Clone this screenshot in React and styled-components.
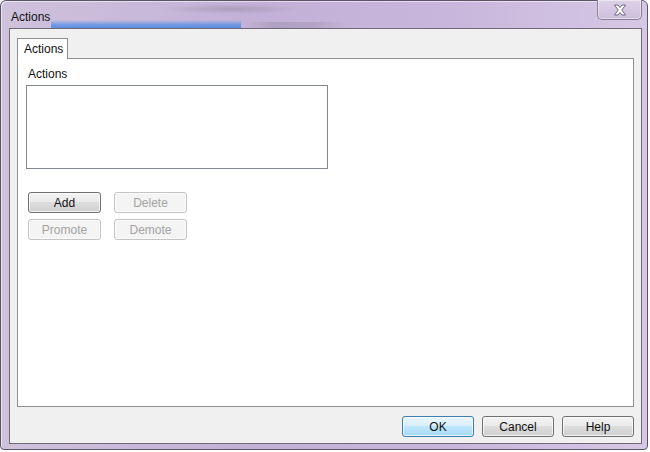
import React from "react";
import styled, { createGlobalStyle } from "styled-components";

const Global = createGlobalStyle`
  body {
    margin: 0;
    background: #ffffff;
    font-family: "Liberation Sans", Arial, sans-serif;
  }
`;

const Window = styled.div`
  box-sizing: border-box;
  width: 648px;
  height: 450px;
  border: 1px solid #5c5568;
  border-radius: 6px 6px 4px 4px;
  background:
    linear-gradient(rgba(160, 190, 240, 0) 0%, rgba(90, 145, 230, 0.75) 45%, rgba(70, 128, 226, 0.95) 100%) 50px 19px / 190px 10px no-repeat,
    linear-gradient(90deg, rgba(150, 140, 165, 0) 0%, rgba(150, 140, 165, 0.45) 30%, rgba(150, 140, 165, 0.35) 70%, rgba(150, 140, 165, 0) 100%) 245px 21px / 100px 7px no-repeat,
    radial-gradient(ellipse 70px 5px at 230px 8px, rgba(120, 110, 130, 0.3), rgba(120, 110, 130, 0) 100%),
    linear-gradient(90deg, #cfc2dc 0%, #c2b0d6 40%, #c9b6dc 70%, #d6c8e4 100%);
  display: flex;
  flex-direction: column;
  padding: 0 5px 5px 8px;
  box-shadow: inset 1px 1px 0 rgba(255, 255, 255, 0.55);
`;

const TitleBar = styled.div`
  height: 28px;
  display: flex;
  align-items: flex-start;
  justify-content: space-between;
`;

const Title = styled.span`
  font-size: 12px;
  color: #111;
  padding: 9px 0 0 2px;
`;

const CloseButton = styled.div`
  box-sizing: border-box;
  width: 45px;
  height: 20px;
  margin-top: -1px;
  border: 1px solid #8a7e99;
  border-top: none;
  border-radius: 0 0 5px 5px;
  background: linear-gradient(#ddd2e8, #cbbedc);
  box-shadow: inset 0 0 0 1px rgba(255, 255, 255, 0.45);
  display: flex;
  align-items: center;
  justify-content: center;
`;

const Client = styled.div`
  flex: 1;
  box-sizing: border-box;
  border: 1px solid #6e6a78;
  background: #f0f0f0;
  display: flex;
  flex-direction: column;
  padding: 9px 7px 6px 7px;
`;

const TabStrip = styled.div`
  display: flex;
  height: 20px;
`;

const Tab = styled.div`
  box-sizing: border-box;
  width: 51px;
  height: 21px;
  border: 1px solid #8e8f8f;
  border-bottom: none;
  background: #ffffff;
  font-size: 12px;
  color: #111;
  padding: 3px 0 0 6px;
  position: relative;
  z-index: 1;
`;

const Panel = styled.div`
  box-sizing: border-box;
  height: 349px;
  border: 1px solid #8e8f8f;
  background: #ffffff;
  padding: 8px 0 0 8px;
  display: flex;
  flex-direction: column;
`;

const Label = styled.div`
  font-size: 12px;
  color: #111;
  padding-left: 2px;
  height: 18px;
`;

const ListBox = styled.div`
  box-sizing: border-box;
  width: 302px;
  height: 84px;
  border: 1px solid #828790;
  background: #ffffff;
`;

const ButtonGrid = styled.div`
  display: grid;
  grid-template-columns: repeat(2, 73px);
  column-gap: 13px;
  row-gap: 6px;
  margin: 23px 0 0 2px;
`;

const Button = styled.div`
  box-sizing: border-box;
  width: ${(p) => p.$w || 73}px;
  height: 21px;
  border-radius: 3px;
  font-size: 12px;
  display: flex;
  align-items: center;
  justify-content: center;
  color: ${(p) => (p.$disabled ? "#a3a3a3" : "#111")};
  border: 1px solid ${(p) => (p.$default ? "#3c7fb1" : p.$disabled ? "#c4c4c4" : "#707070")};
  background: ${(p) =>
    p.$disabled
      ? "#f4f4f4"
      : p.$default
      ? "linear-gradient(#eaf6fd 0%, #d9f0fc 45%, #bee6fd 50%, #a7d9f5 100%)"
      : "linear-gradient(#f2f2f2 0%, #ebebeb 45%, #dddddd 50%, #cfcfcf 100%)"};
  box-shadow: inset 0 0 0 1px ${(p) => (p.$disabled ? "#fbfbfb" : "rgba(255,255,255,0.7)")};
`;

const Footer = styled.div`
  display: flex;
  justify-content: flex-end;
  gap: 8px;
  padding-top: 9px;
`;

const CloseIcon = () => (
  <svg width="14" height="12" viewBox="0 0 14 12">
    <path
      d="M1.5 1 H5 L7 3.6 L9 1 H12.5 L8.8 6 L12.5 11 H9 L7 8.4 L5 11 H1.5 L5.2 6 Z"
      fill="#ffffff"
      stroke="#6f6680"
      strokeWidth="1"
      strokeLinejoin="round"
    />
  </svg>
);

export default function App() {
  return (
    <>
      <Global />
      <Window>
        <TitleBar>
          <Title>Actions</Title>
          <CloseButton>
            <CloseIcon />
          </CloseButton>
        </TitleBar>
        <Client>
          <TabStrip>
            <Tab>Actions</Tab>
          </TabStrip>
          <Panel>
            <Label>Actions</Label>
            <ListBox />
            <ButtonGrid>
              <Button>Add</Button>
              <Button $disabled>Delete</Button>
              <Button $disabled>Promote</Button>
              <Button $disabled>Demote</Button>
            </ButtonGrid>
          </Panel>
          <Footer>
            <Button $w={72} $default>OK</Button>
            <Button $w={72}>Cancel</Button>
            <Button $w={72}>Help</Button>
          </Footer>
        </Client>
      </Window>
    </>
  );
}
